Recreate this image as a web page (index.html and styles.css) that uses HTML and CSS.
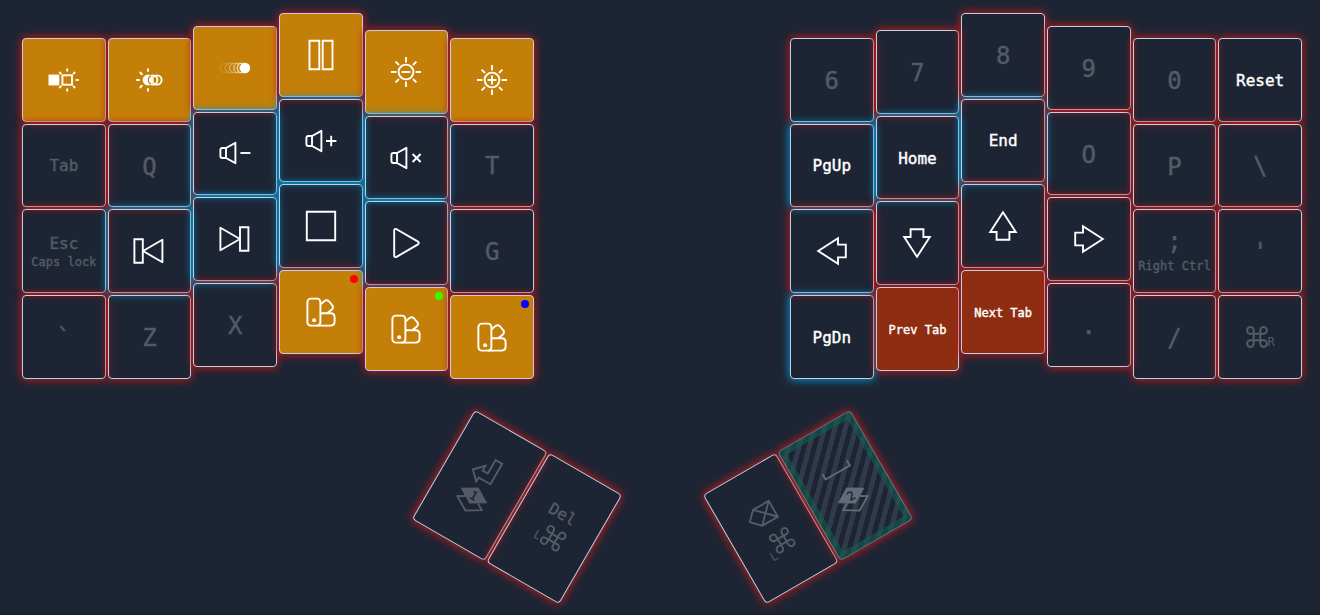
FILE: index.html
```html
<!DOCTYPE html>
<html lang="en">
<head>
<meta charset="utf-8">
<meta name="viewport" content="width=device-width, initial-scale=1">
<title>Keymap</title>
<link rel="stylesheet" href="styles.css">
</head>
<body>
<svg class="sprite" aria-hidden="true">
  <symbol id="swap-light" viewBox="-16 -16 32 32">
    <rect x="-15.5" y="-5.4" width="10.8" height="10.8" fill="currentColor" stroke="none"/>
    <rect x="-1.6" y="-4.7" width="9.6" height="9.4"/>
    <path d="M3.2-11.6v3M3.2 8.6v3M11.6 0h3.2M-4.7-8l2 2.2M11.1-8l-2 2.2M-4.7 8l2-2.2M11.1 8l-2-2.2"/>
  </symbol>
  <symbol id="light-effect" viewBox="-16 -16 32 32">
    <circle cx="3.8" r="4.6"/><circle cx="8" r="4.6"/>
    <circle cx="-1" r="5.4" fill="currentColor" stroke="none"/>
    <path class="cut" d="M2-4.2A4.6 4.6 0 0 0 2 4.2"/>
    <path d="M-1-11.6v3.4M-1 8.2v3.4M-12.8 0h3.6M-9.2-8l2.6 2.8M-9.2 8l2.6-2.8"/>
  </symbol>
  <symbol id="speed" viewBox="-16 -16 32 32">
    <g class="hair">
      <circle cx="-10" r="4.9" opacity=".2"/><circle cx="-5" r="4.9" opacity=".35"/>
      <circle cx="-.5" r="4.9" opacity=".5"/><circle cx="3.5" r="4.9" opacity=".7"/><circle cx="7" r="4.9"/>
    </g>
    <circle cx="10" r="5.2" fill="currentColor" stroke="none"/>
  </symbol>
  <symbol id="pause" viewBox="-16 -16 32 32"><path d="M-11.5-14.2h9.8v28.4h-9.8zM1.7-14.2h9.8v28.4h-9.8z"/></symbol>
  <symbol id="sun" viewBox="-16 -16 32 32">
    <circle r="7.4"/>
    <path d="M0-15v5.4M0 9.6V15M-15 0h5.4M9.6 0H15M-10.4-10.4l3.4 3.4M10.4-10.4L7-7M-10.4 10.4L-7 7M10.4 10.4L7 7"/>
  </symbol>
  <symbol id="dim" viewBox="-16 -16 32 32"><use href="#sun" x="-16" y="-16" width="32" height="32"/><path d="M-4.4 0h8.8"/></symbol>
  <symbol id="brighten" viewBox="-16 -16 32 32"><use href="#sun" x="-16" y="-16" width="32" height="32"/><path d="M-4.4 0h8.8M0-4.4v8.8"/></symbol>
  <symbol id="speaker" viewBox="-16 -16 32 32">
    <path stroke-linejoin="round" d="M-9-5h-3.6q-2 0-2 2v6q0 2 2 2H-9zM-9-5L.4-10.2v20.4L-9 5"/>
  </symbol>
  <symbol id="quieter" viewBox="-16 -16 32 32"><use href="#speaker" x="-16" y="-16" width="32" height="32"/><path d="M5.4 0h10"/></symbol>
  <symbol id="louder" viewBox="-16 -16 32 32"><use href="#speaker" x="-16" y="-16" width="32" height="32"/><path d="M5 0h10.4M10.2-5.2V5.2"/></symbol>
  <symbol id="mute" viewBox="-16 -16 32 32"><use href="#speaker" x="-16" y="-16" width="32" height="32"/><path d="M6.6-4l8 8M14.6-4l-8 8"/></symbol>
  <symbol id="previous" viewBox="-16 -16 32 32"><path stroke-linejoin="round" d="M13.4-11.2v22.4L-6 0z"/><path d="M-14.6-11.8h8.4v23.6h-8.4z"/></symbol>
  <symbol id="next" viewBox="-16 -16 32 32"><path stroke-linejoin="round" d="M-14.6-11.2v22.4L5 0z"/><path d="M5-11.8h8.4v23.6H5z"/></symbol>
  <symbol id="stop" viewBox="-16 -16 32 32"><path d="M-14.2-14.2h28.4v28.4h-28.4z"/></symbol>
  <symbol id="play" viewBox="-16 -16 32 32"><path d="M-9.4-13.8L12-1.4q1.6 1.4 0 2.8L-9.4 13.8q-2.4 1-2.4-1.4v-24.8q0-2.4 2.4-1.4z"/></symbol>
  <symbol id="swatches" viewBox="-16 -16 32 32">
    <rect x="-13.6" y="-13.4" width="13" height="27" rx="3.4"/>
    <path d="M-.6-7.6l4.2-3.4q2.2-1.6 4.2.2l3.4 4q1.6 2 0 4L6.4 1M-.6 1.2H9.6q4 0 4 4v4.4q0 4-4 4H-4"/>
    <circle cx="-6.9" cy="8.2" r="2" fill="currentColor" stroke="none"/>
  </symbol>
  <symbol id="arrow" viewBox="-16 -16 32 32"><path d="M-13.8 0L6-12.8v6.4h7.8V6.4H6v6.4z"/></symbol>
  <symbol id="enter" viewBox="-16 -16 32 32"><path d="M1-14h7.6V9.6H-5v4.8L-14 5.6-5-3.8v5.4h6z"/></symbol>
  <symbol id="layers" viewBox="-16 -16 32 32">
    <path d="M-7.4.4L-14 4.4 0 12.8 14 4.4 7.4.4"/>
    <path d="M0-13.6L15.4-4.4 0 4.8-15.4-4.4z" fill="currentColor" stroke="none"/>
  </symbol>
  <symbol id="backspace" viewBox="-16 -16 32 32"><path d="M-15 0l9-9H12V9.4H-6zM-6-9L12 9.4M12-9L-6 9.4"/></symbol>
  <symbol id="space" viewBox="-16 -16 32 32"><path d="M-14-5v6h28v-6"/></symbol>
  <symbol id="command" viewBox="2 2 20 20"><path d="M15 6v12a3 3 0 1 0 3-3H6a3 3 0 1 0 3 3V6a3 3 0 1 0-3 3h12a3 3 0 1 0-3-3"/></symbol>
</svg>

<main class="keyboard">
  <div class="halves">
    <section class="half left" aria-label="Left half">
      <div class="column">
        <button class="key gold" aria-label="Toggle backlight"><svg class="icon"><use href="#swap-light"/></svg></button>
        <button class="key off">Tab</button>
        <button class="key off stack"><span>Esc</span><small>Caps lock</small></button>
        <button class="key off letter">`</button>
      </div>
      <div class="column">
        <button class="key gold" aria-label="Light effect"><svg class="icon"><use href="#light-effect"/></svg></button>
        <button class="key off letter">Q</button>
        <button class="key blue" aria-label="Previous track"><svg class="icon"><use href="#previous"/></svg></button>
        <button class="key off letter">Z</button>
      </div>
      <div class="column">
        <button class="key gold" aria-label="Effect speed"><svg class="icon"><use href="#speed"/></svg></button>
        <button class="key blue" aria-label="Volume down"><svg class="icon"><use href="#quieter"/></svg></button>
        <button class="key blue" aria-label="Next track"><svg class="icon"><use href="#next"/></svg></button>
        <button class="key off letter">X</button>
      </div>
      <div class="column">
        <button class="key gold" aria-label="Pause"><svg class="icon"><use href="#pause"/></svg></button>
        <button class="key blue" aria-label="Volume up"><svg class="icon"><use href="#louder"/></svg></button>
        <button class="key blue" aria-label="Stop"><svg class="icon"><use href="#stop"/></svg></button>
        <button class="key gold" aria-label="Red colour"><svg class="icon"><use href="#swatches"/></svg><i class="dot red"></i></button>
      </div>
      <div class="column">
        <button class="key gold" aria-label="Dim backlight"><svg class="icon"><use href="#dim"/></svg></button>
        <button class="key blue" aria-label="Mute"><svg class="icon"><use href="#mute"/></svg></button>
        <button class="key blue" aria-label="Play"><svg class="icon"><use href="#play"/></svg></button>
        <button class="key gold" aria-label="Green colour"><svg class="icon"><use href="#swatches"/></svg><i class="dot green"></i></button>
      </div>
      <div class="column">
        <button class="key gold" aria-label="Brighten backlight"><svg class="icon"><use href="#brighten"/></svg></button>
        <button class="key off letter">T</button>
        <button class="key off letter">G</button>
        <button class="key gold" aria-label="Blue colour"><svg class="icon"><use href="#swatches"/></svg><i class="dot navy"></i></button>
      </div>
    </section>

    <section class="half right" aria-label="Right half">
      <div class="column">
        <button class="key off letter">6</button>
        <button class="key blue">PgUp</button>
        <button class="key" aria-label="Left"><svg class="icon"><use href="#arrow"/></svg></button>
        <button class="key blue">PgDn</button>
      </div>
      <div class="column">
        <button class="key off letter">7</button>
        <button class="key blue">Home</button>
        <button class="key" aria-label="Down"><svg class="icon turn-down"><use href="#arrow"/></svg></button>
        <button class="key rust"><small>Prev Tab</small></button>
      </div>
      <div class="column">
        <button class="key off letter">8</button>
        <button class="key blue">End</button>
        <button class="key" aria-label="Up"><svg class="icon turn-up"><use href="#arrow"/></svg></button>
        <button class="key rust"><small>Next Tab</small></button>
      </div>
      <div class="column">
        <button class="key off letter">9</button>
        <button class="key off letter">O</button>
        <button class="key" aria-label="Right"><svg class="icon turn-right"><use href="#arrow"/></svg></button>
        <button class="key off letter">.</button>
      </div>
      <div class="column">
        <button class="key off letter">0</button>
        <button class="key off letter">P</button>
        <button class="key off stack"><span class="letter">;</span><small>Right Ctrl</small></button>
        <button class="key off letter">/</button>
      </div>
      <div class="column">
        <button class="key">Reset</button>
        <button class="key off letter">\</button>
        <button class="key off letter">'</button>
        <button class="key off" aria-label="Right command"><span class="modifier"><svg class="command"><use href="#command"/></svg><small>R</small></span></button>
      </div>
    </section>
  </div>

  <div class="thumbs">
    <section class="cluster tilt-right" aria-label="Left thumb">
      <button class="key off tall" aria-label="Enter, layer 1">
        <svg class="icon"><use href="#enter"/></svg>
        <span class="layer"><svg class="icon"><use href="#layers"/></svg><b>1</b></span>
      </button>
      <button class="key off tall raised">
        <span>Del</span>
        <span class="modifier"><small>L</small><svg class="command"><use href="#command"/></svg></span>
      </button>
    </section>
    <section class="cluster tilt-left" aria-label="Right thumb">
      <button class="key off tall" aria-label="Backspace, left command">
        <svg class="icon"><use href="#backspace"/></svg>
        <span class="modifier slot"><small>L</small><svg class="command"><use href="#command"/></svg></span>
      </button>
      <button class="key off tall held" aria-label="Space, layer 2">
        <svg class="icon"><use href="#space"/></svg>
        <span class="layer"><svg class="icon"><use href="#layers"/></svg><b>2</b></span>
      </button>
    </section>
  </div>
</main>
</body>
</html>
```
FILE: styles.css
```css
:root {
  --page: #1d2534;
  --edge: #c3d0e4;
  --muted: #545b67;
  --gold: #c47f08;
  --rust: #8e2d12;
}

* { box-sizing: border-box; }

body {
  margin: 0;
  background: var(--page);
  color: #fff;
  font-family: "DejaVu Sans Mono", "Liberation Mono", monospace;
  overflow-x: hidden;
}

.sprite { position: absolute; width: 0; height: 0; }

.keyboard {
  min-height: 100vh;
  padding: 13px 18px 0 22px;
  border-bottom: 1px solid #151c27;
  overflow: hidden;
}

.halves { display: flex; justify-content: space-between; }

.half {
  display: grid;
  grid-template-columns: repeat(6, minmax(0, 1fr));
  gap: 2px;
  align-items: start;
  width: 40%;
}

.column { display: grid; gap: 2px; margin-top: 25px; }
.left .column:nth-child(3), .right .column:nth-child(4) { margin-top: 13px; }
.left .column:nth-child(4), .right .column:nth-child(3) { margin-top: 0; }
.left .column:nth-child(5), .right .column:nth-child(2) { margin-top: 17px; }

.key {
  position: relative;
  display: flex;
  align-items: center;
  justify-content: center;
  width: 100%;
  min-width: 0;
  aspect-ratio: 1;
  margin: 0;
  padding: 0;
  border: 1px solid var(--edge);
  border-radius: 4px;
  background: transparent;
  box-shadow: 0 0 8px 1px #b91c1c;
  color: #fff;
  font: inherit;
  font-size: 16px;
  line-height: 24px;
  white-space: nowrap;
  -webkit-text-stroke: 0.4px currentColor;
}
.key:not(:has(svg)) { padding-top: 2px; }

.key small { font-size: 12px; line-height: 16px; }
.blue { box-shadow: 0 0 8px 1px #0a94cc; }
.gold { background: var(--gold); }
.rust { background: var(--rust); }
.off { color: var(--muted); }
.letter { font-size: 24px; }
.stack { flex-direction: column; line-height: 20px; }
.stack .letter { line-height: 28px; }
.stack .letter + small { line-height: 20px; }

.icon {
  width: 32px;
  height: 32px;
  fill: none;
  stroke: currentColor;
  stroke-width: 1.9;
}
.hair { stroke-width: 0.8; }
.cut { stroke: var(--gold); stroke-width: 1.2; }
.turn-up { transform: rotate(90deg); }
.turn-right { transform: rotate(180deg); }
.turn-down { transform: rotate(270deg); }

.dot {
  position: absolute;
  top: 4px;
  right: 4px;
  width: 8px;
  height: 8px;
  border-radius: 50%;
}
.red { background: #f00; }
.green { background: #3f0; }
.navy { background: #00f; }

.modifier { display: flex; align-items: flex-end; }
.modifier small { line-height: 12px; -webkit-text-stroke: 0; }
.command {
  width: 22px;
  height: 22px;
  fill: none;
  stroke: currentColor;
  stroke-width: 1.8;
}

.thumbs {
  display: flex;
  justify-content: center;
  gap: 121px;
  margin-top: 65px;
}
.cluster { display: flex; gap: 2px; }
.tilt-right { transform: rotate(30deg); }
.tilt-left { transform: rotate(-30deg); }

.tall {
  flex-direction: column;
  width: 84px;
  aspect-ratio: 2 / 3;
}
.raised { gap: 2px; padding-bottom: 8px; }
.slot { height: 32px; }
.modifier.slot { align-items: center; }
.modifier.slot small { align-self: flex-end; }

.layer { display: grid; place-items: center; }
.layer > * { grid-area: 1 / 1; }
.layer b {
  z-index: 1;
  padding-bottom: 8px;
  color: var(--page);
  font-size: 12px;
  font-weight: 400;
  line-height: 14px;
}

.held {
  border-color: #6c7d90;
  background: repeating-linear-gradient(-45deg, #1d2534 0 5px, #313a4a 5px 10px);
}
.held .icon { color: #646b77; }
.held::before {
  content: "";
  position: absolute;
  inset: 0;
  border: 6px solid rgb(16 98 80 / 0.55);
  border-radius: 3px;
}
```
